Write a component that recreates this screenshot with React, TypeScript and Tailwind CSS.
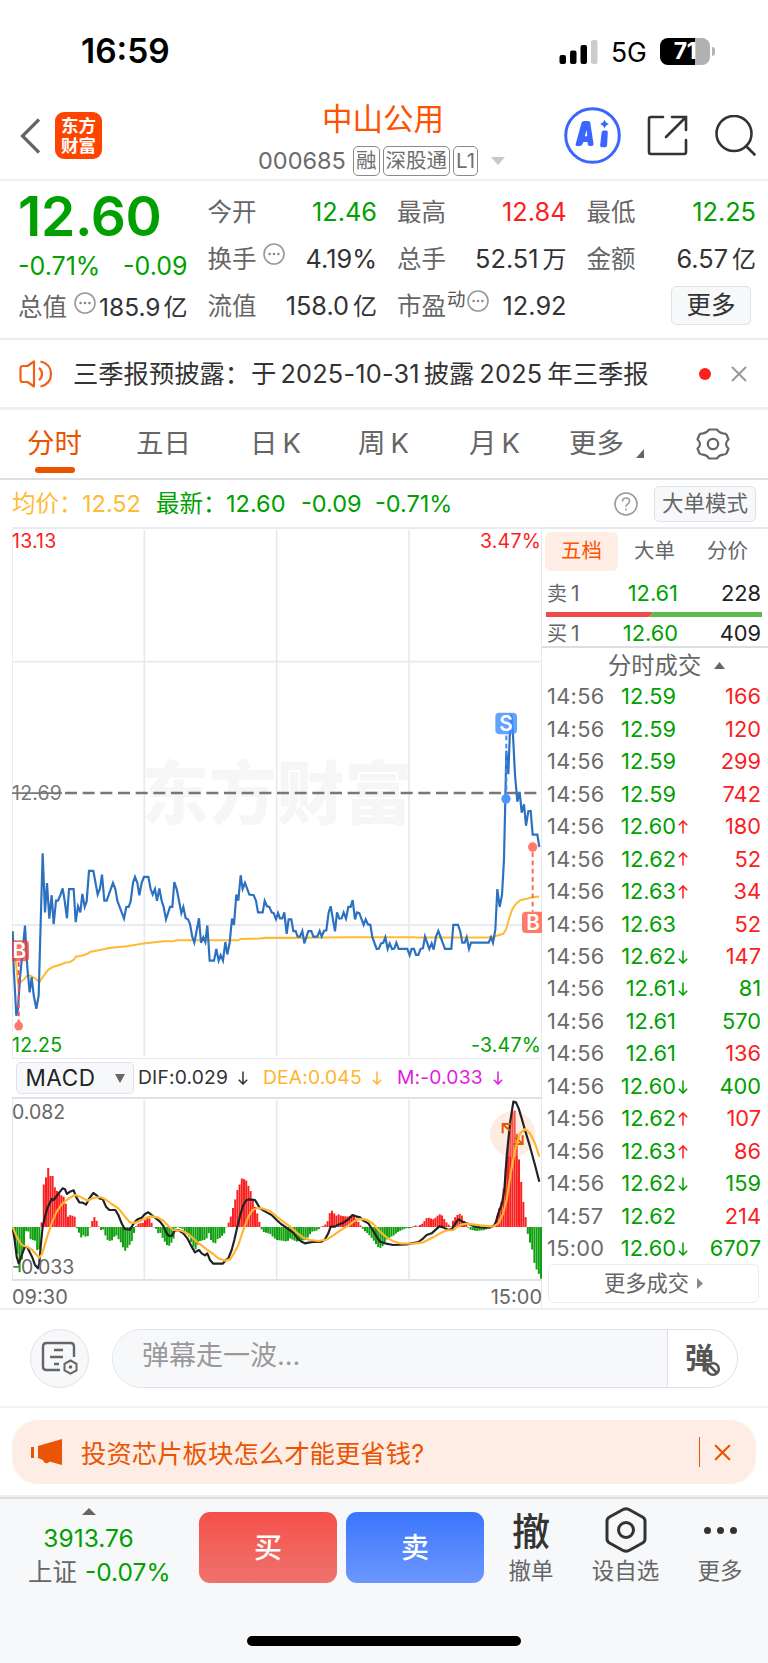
import type { ReactNode } from 'react'
import { X } from 'lucide-react'

const fontStack = "font-['Inter','Noto_Sans_CJK_SC',sans-serif]"
const greyBtn = 'flex items-center justify-center rounded-[5px] border border-[#dfe2ea] bg-[#f7f8fa] leading-none'

type Point = [number, number]

const price: Point[] = [
  [38, 1195], [41, 1300], [49, 1440], [54, 1420], [60, 1330], [68, 1250], [75, 1178], [82, 1300], [89, 1372], [95, 1328],
  [101, 1380], [109, 1420], [116, 1382], [120, 1240], [128, 968], [135, 1140], [141, 1055], [148, 1158], [155, 1090],
  [161, 1174], [168, 1106], [174, 1106], [181, 1090], [188, 1070], [194, 1106], [201, 1157], [207, 1072], [221, 1072],
  [227, 1168], [234, 1122], [241, 1140], [247, 1086], [254, 1124], [260, 1108], [267, 1019], [280, 1019], [293, 1088],
  [300, 1070], [306, 1030], [313, 1106], [320, 1106], [339, 1054], [346, 1072], [352, 1106], [372, 1158], [379, 1124],
  [386, 1124], [392, 1108], [399, 1054], [405, 1037], [412, 1054], [418, 1090], [425, 1054], [432, 1037], [445, 1037],
  [452, 1072], [458, 1088], [465, 1072], [471, 1106], [478, 1070], [485, 1106], [491, 1124], [498, 1160], [510, 1124],
  [517, 1124], [523, 1052], [530, 1072], [537, 1106], [544, 1142], [550, 1124], [557, 1157], [564, 1160], [570, 1174],
  [577, 1212], [583, 1228], [597, 1157], [603, 1228], [610, 1212], [616, 1226], [622, 1178], [629, 1280], [642, 1280],
  [649, 1246], [656, 1280], [662, 1264], [669, 1280], [676, 1226], [682, 1262], [689, 1228], [696, 1158], [702, 1176],
  [709, 1088], [715, 1106], [722, 1032], [728, 1072], [735, 1054], [748, 1088], [761, 1090], [768, 1106], [774, 1140],
  [788, 1140], [794, 1106], [801, 1122], [808, 1124], [815, 1140], [821, 1142], [828, 1160], [834, 1142], [840, 1157],
  [847, 1157], [853, 1140], [860, 1202], [866, 1160], [874, 1160], [880, 1194], [887, 1194], [893, 1210], [900, 1210],
  [907, 1194], [913, 1230], [925, 1194], [934, 1194], [940, 1210], [952, 1210], [959, 1194], [965, 1210], [972, 1194],
  [979, 1192], [986, 1140], [992, 1122], [1005, 1195], [1011, 1140], [1018, 1158], [1025, 1157], [1031, 1140],
  [1038, 1158], [1045, 1124], [1052, 1124], [1058, 1104], [1065, 1160], [1071, 1140], [1078, 1142], [1091, 1176],
  [1097, 1160], [1104, 1175], [1111, 1176], [1117, 1212], [1130, 1246], [1137, 1245], [1143, 1230], [1150, 1228],
  [1156, 1212], [1163, 1246], [1169, 1230], [1176, 1246], [1183, 1245], [1189, 1228], [1196, 1246], [1222, 1246],
  [1229, 1264], [1235, 1246], [1242, 1246], [1248, 1263], [1255, 1263], [1262, 1246], [1269, 1244], [1275, 1210],
  [1288, 1246], [1295, 1230], [1301, 1248], [1308, 1210], [1315, 1194], [1335, 1246], [1354, 1246], [1360, 1176],
  [1374, 1176], [1381, 1196], [1387, 1228], [1394, 1228], [1400, 1212], [1407, 1246], [1413, 1228], [1466, 1228],
  [1473, 1212], [1479, 1228], [1486, 1190], [1492, 1072], [1499, 1124], [1506, 1090], [1512, 985], [1516, 810],
  [1519, 670], [1525, 738], [1530, 610], [1534, 565], [1539, 625], [1545, 740], [1552, 818], [1559, 790], [1565, 850],
  [1572, 826], [1578, 888], [1585, 846], [1592, 845], [1598, 914], [1612, 914], [1618, 950],
]

const average: Point[] = [
  [38, 1195], [44, 1260], [55, 1350], [62, 1342], [72, 1335], [82, 1322], [95, 1325], [108, 1334], [118, 1343],
  [130, 1325], [145, 1306], [160, 1298], [180, 1292], [195, 1286], [210, 1284], [222, 1277], [228, 1268], [245, 1266],
  [262, 1260], [272, 1254], [300, 1249], [330, 1243], [380, 1238], [430, 1230], [490, 1224], [520, 1224], [530, 1221],
  [715, 1221], [722, 1217], [780, 1216], [795, 1214], [870, 1214], [1040, 1212], [1243, 1212], [1250, 1213],
  [1460, 1213], [1485, 1210], [1495, 1206], [1510, 1202], [1518, 1190], [1528, 1155], [1538, 1128], [1550, 1113],
  [1562, 1104], [1580, 1100], [1600, 1095], [1618, 1094],
]

const dif: Point[] = [
  [38, 535], [44, 570], [50, 620], [56, 640], [62, 625], [68, 608], [75, 590], [82, 592], [90, 608], [98, 625],
  [105, 645], [114, 655], [118, 640], [122, 590], [128, 530], [135, 500], [142, 475], [150, 458], [155, 447],
  [161, 450], [170, 438], [180, 425], [188, 415], [195, 418], [201, 432], [210, 425], [221, 421], [228, 440],
  [238, 457], [248, 458], [258, 464], [268, 445], [280, 429], [290, 436], [300, 446], [308, 447], [318, 470],
  [328, 480], [346, 480], [355, 495], [365, 520], [374, 537], [390, 539], [400, 522], [408, 512], [415, 507],
  [425, 503], [435, 492], [445, 487], [455, 495], [468, 505], [480, 515], [490, 528], [500, 550], [507, 558],
  [516, 557], [524, 542], [535, 540], [550, 550], [562, 565], [575, 590], [585, 607], [597, 600], [605, 610],
  [615, 616], [622, 610], [630, 630], [640, 641], [668, 641], [678, 630], [685, 625], [695, 600], [703, 570],
  [712, 530], [722, 490], [730, 465], [740, 450], [750, 448], [765, 450], [780, 475], [800, 487], [815, 495],
  [830, 510], [843, 522], [855, 530], [870, 541], [880, 548], [895, 568], [905, 575], [915, 580], [925, 578],
  [940, 576], [965, 575], [975, 568], [985, 550], [992, 530], [1005, 530], [1015, 524], [1030, 518], [1045, 508],
  [1058, 495], [1068, 499], [1080, 502], [1090, 512], [1105, 520], [1118, 540], [1130, 560], [1140, 575],
  [1155, 580], [1180, 585], [1220, 583], [1255, 576], [1270, 565], [1280, 555], [1295, 550], [1308, 538],
  [1318, 529], [1330, 532], [1345, 540], [1356, 537], [1365, 522], [1375, 508], [1388, 515], [1400, 520],
  [1415, 526], [1440, 532], [1470, 533], [1485, 525], [1495, 490], [1506, 460], [1513, 420], [1520, 320],
  [1530, 220], [1540, 155], [1548, 157], [1556, 175], [1565, 205], [1575, 240], [1590, 290], [1605, 345], [1618, 395],
]

const dea: Point[] = [
  [38, 532], [50, 560], [65, 585], [80, 590], [95, 598], [110, 615], [118, 623], [126, 612], [140, 565], [155, 520],
  [170, 485], [185, 463], [200, 450], [215, 440], [225, 435], [240, 440], [262, 452], [280, 444], [300, 441],
  [315, 447], [335, 462], [355, 475], [375, 500], [390, 517], [400, 519], [415, 515], [440, 503], [455, 499],
  [475, 503], [490, 512], [505, 528], [520, 540], [545, 542], [565, 552], [590, 575], [620, 598], [640, 612],
  [655, 625], [675, 632], [690, 628], [702, 610], [715, 585], [730, 540], [745, 500], [758, 480], [772, 474],
  [790, 476], [810, 483], [830, 500], [850, 515], [870, 530], [890, 548], [910, 563], [930, 570], [955, 573],
  [980, 569], [1000, 556], [1020, 542], [1045, 527], [1065, 512], [1080, 507], [1100, 509], [1120, 522],
  [1140, 545], [1160, 562], [1180, 574], [1200, 580], [1240, 581], [1270, 577], [1300, 562], [1320, 550],
  [1340, 541], [1360, 540], [1380, 525], [1400, 521], [1440, 526], [1480, 530], [1495, 520], [1510, 490],
  [1520, 450], [1532, 370], [1545, 300], [1560, 250], [1575, 237], [1590, 250], [1605, 280], [1618, 320],
]

const histogram: Point[] = [
  [38, 540], [44, 560], [52, 610], [59, 668], [66, 625], [73, 595], [79, 540], [86, 545], [92, 568], [105, 572],
  [112, 602], [118, 600], [125, 515], [132, 393], [138, 382], [145, 352], [151, 378], [158, 378], [165, 415],
  [178, 432], [191, 440], [198, 463], [204, 500], [211, 495], [224, 500], [231, 538], [237, 548], [244, 563],
  [251, 555], [257, 560], [264, 558], [271, 528], [277, 512], [283, 501], [290, 513], [297, 531], [303, 540],
  [310, 538], [316, 556], [323, 570], [330, 573], [336, 571], [343, 560], [350, 556], [356, 568], [363, 578],
  [369, 592], [376, 603], [383, 592], [390, 583], [396, 572], [403, 545], [410, 524], [417, 520], [430, 518],
  [440, 503], [447, 503], [454, 517], [461, 531], [467, 534], [474, 550], [480, 546], [487, 562], [500, 585],
  [507, 588], [513, 580], [520, 570], [527, 535], [533, 530], [540, 534], [547, 536], [560, 552], [567, 560],
  [573, 575], [580, 590], [587, 598], [593, 585], [600, 573], [613, 570], [620, 565], [627, 548], [633, 570],
  [640, 578], [647, 580], [653, 567], [660, 564], [673, 550], [680, 529], [690, 510], [697, 480], [703, 462],
  [710, 425], [717, 410], [724, 385], [731, 387], [738, 390], [744, 405], [751, 420], [758, 448], [764, 468],
  [771, 488], [778, 515], [784, 537], [791, 546], [798, 548], [811, 552], [820, 562], [830, 570], [847, 572],
  [862, 575], [870, 565], [880, 570], [890, 575], [900, 572], [918, 570], [925, 560], [935, 545], [945, 543],
  [955, 540], [960, 531], [968, 529], [975, 525], [982, 517], [986, 500], [992, 481], [1000, 483], [1006, 500],
  [1014, 492], [1025, 498], [1045, 500], [1058, 492], [1068, 505], [1078, 520], [1085, 532], [1093, 542],
  [1105, 552], [1112, 560], [1120, 570], [1128, 582], [1138, 596], [1148, 588], [1158, 570], [1170, 562],
  [1182, 556], [1192, 547], [1205, 540], [1220, 534], [1232, 535], [1240, 529], [1246, 526], [1255, 530],
  [1262, 523], [1270, 520], [1277, 505], [1285, 503], [1300, 508], [1310, 500], [1318, 492], [1327, 497],
  [1337, 515], [1346, 524], [1352, 530], [1360, 510], [1368, 498], [1378, 491], [1386, 497], [1393, 515],
  [1400, 520], [1407, 538], [1430, 543], [1455, 540], [1466, 533], [1476, 528], [1486, 515], [1496, 480],
  [1506, 450], [1513, 400], [1520, 330], [1530, 220], [1540, 172], [1545, 185], [1549, 235], [1556, 318],
  [1562, 380], [1569, 448], [1576, 495], [1583, 550], [1590, 578], [1596, 595], [1602, 635], [1609, 657],
  [1615, 668], [1622, 686],
]

const trades = [
  ['14:56', '12.59', '', '166', 'r'],
  ['14:56', '12.59', '', '120', 'r'],
  ['14:56', '12.59', '', '299', 'r'],
  ['14:56', '12.59', '', '742', 'r'],
  ['14:56', '12.60', 'up', '180', 'r'],
  ['14:56', '12.62', 'up', '52', 'r'],
  ['14:56', '12.63', 'up', '34', 'r'],
  ['14:56', '12.63', '', '52', 'r'],
  ['14:56', '12.62', 'down', '147', 'r'],
  ['14:56', '12.61', 'down', '81', 'g'],
  ['14:56', '12.61', '', '570', 'g'],
  ['14:56', '12.61', '', '136', 'r'],
  ['14:56', '12.60', 'down', '400', 'g'],
  ['14:56', '12.62', 'up', '107', 'r'],
  ['14:56', '12.63', 'up', '86', 'r'],
  ['14:56', '12.62', 'down', '159', 'g'],
  ['14:57', '12.62', '', '214', 'r'],
  ['15:00', '12.60', 'down', '6707', 'g'],
]

const toPoints = (pts: Point[]) => pts.map((p) => p.join(',')).join(' ')

// linear interpolation, one bar per minute
function valueAt(pts: Point[], x: number) {
  for (let i = 1; i < pts.length; i++) {
    const [x0, y0] = pts[i - 1]
    const [x1, y1] = pts[i]
    if (x <= x1) return y0 + ((y1 - y0) * (x - x0)) / (x1 - x0)
  }
  return pts[pts.length - 1][1]
}

function InfoDots() {
  return (
    <svg width="22" height="22" viewBox="0 0 22 22" fill="none" className="shrink-0">
      <circle cx="11" cy="11" r="10" stroke="#999" strokeWidth="1.6" />
      <circle cx="6.6" cy="11" r="1.3" fill="#888" />
      <circle cx="11" cy="11" r="1.3" fill="#888" />
      <circle cx="15.4" cy="11" r="1.3" fill="#888" />
    </svg>
  )
}

function Arrow({ dir, className }: { dir: string; className?: string }) {
  return (
    <svg width="10" height="14" viewBox="0 0 10 14" fill="none" stroke="currentColor" strokeWidth="1.5" className={className}>
      {dir === 'up' ? <path d="M5 13.5V1M0.8 5.3 5 1l4.2 4.3" /> : <path d="M5 .5V13M.8 8.7 5 13l4.2-4.3" />}
    </svg>
  )
}

function StatusBar() {
  return (
    <div className="flex h-[92px] items-center justify-between pt-[11px] pr-[53px] pl-[81px] text-black">
      <div className="pt-[1px] text-[33.5px] font-semibold leading-none">16:59</div>
      <div className="flex items-center">
        <svg width="40" height="24" viewBox="0 0 40 24">
          <rect x="0.5" y="15" width="6.5" height="9" rx="2" />
          <rect x="11" y="10.5" width="6.5" height="13.5" rx="2" />
          <rect x="21.5" y="5" width="6.5" height="19" rx="2" />
          <rect x="32" y="0" width="6.5" height="24" rx="2" fill="#ccc" />
        </svg>
        <span className="ml-[12px] w-[37px] pt-[1px] text-[26.5px] leading-none">5G</span>
        <div className="ml-[12px] flex h-[27px] w-[50px] items-center justify-center rounded-[8px] bg-linear-to-r from-black from-70% to-[#b1b1b1] to-70%">
          <span className="text-[23px] font-bold leading-none tracking-[-0.5px] text-white">71</span>
        </div>
        <div className="ml-[2px] h-[9px] w-[3px] rounded-r-full bg-[#b5b5b5]" />
      </div>
    </div>
  )
}

function Tag({ children }: { children: ReactNode }) {
  return (
    <span className="flex h-[30px] items-center rounded-[5px] border-[1.5px] border-[#8a8a8a] px-[2px] text-[20.5px] leading-none text-[#6e6e6e]">
      {children}
    </span>
  )
}

function Header() {
  return (
    <div className="flex h-[89px] border-b-2 border-[#f0f0f2]">
      <div className="flex w-[258px] items-center pl-[20px]">
        <svg width="21" height="36" viewBox="0 0 21 36" fill="none" stroke="#666" strokeWidth="3.2">
          <path d="M19 1.5 2.5 18 19 34.5" />
        </svg>
        <div className="ml-[14px] flex h-[47px] w-[47px] flex-col items-center justify-center rounded-[9px] bg-[#ff4400] text-[17.5px] font-bold leading-[19.5px] text-white">
          <span>东方</span>
          <span>财富</span>
        </div>
      </div>
      <div className="flex w-[249px] flex-col">
        <div className="mt-[10px] pl-[64px] text-[30.5px] leading-[34px] text-[#ff5200]">中山公用</div>
        <div className="mt-[9px] flex h-[32px] items-center">
          <span className="w-[95px] text-[23.5px] leading-none text-[#6b6b6b]">000685</span>
          <div className="flex gap-[3px]">
            <Tag>融</Tag>
            <Tag>深股通</Tag>
            <Tag>L1</Tag>
          </div>
          <svg width="14" height="8" viewBox="0 0 14 8" className="ml-[13px]">
            <path d="M0 0h14L7 8z" fill="#c8c8c8" />
          </svg>
        </div>
      </div>
      <div className="flex flex-1 items-center pl-[57px]">
        <svg width="57" height="57" viewBox="0 0 57 57" fill="none" className="shrink-0">
          <circle cx="28.5" cy="28.5" r="26.8" stroke="#3a66ff" strokeWidth="3" />
          <path
            d="M17.6 15.600Q18.200 14 20 14h4.300q1.700 0 2 1.700l3.200 21q.3 2.300-1.900 2.300h-1.800q-1.800 0-2-1.800l-.2-2.200h-4.300l-.8 2q-.8 2-2.600 2h-3q-1.900 0-1.200-2zM22.600 23l-1.800 6.300h2.500z"
            fill="#3a66ff"
            fillRule="evenodd"
          />
          <path d="M37.700 25.300q.1-1.800 1.900-1.800h2.500q1.800 0 1.700 1.800l-.7 13q-.1 1.900-1.900 1.900h-3.400q-1.800 0-1.700-1.900z" fill="#3a66ff" />
          <path d="M40.500 12.500q1 3.500 4.500 4.500-3.500 1-4.500 4.500-1-3.500-4.500-4.500 3.500-1 4.500-4.500z" fill="#3a66ff" />
        </svg>
        <svg width="41" height="41" viewBox="0 0 41 41" fill="none" stroke="#333" strokeWidth="2.6" strokeLinecap="round" className="ml-[26px] shrink-0">
          <path d="M16 2H4Q2 2 2 4v33q0 2 2 2h33q2 0 2-2V25M25 2h14v13M38.500 2.500 19 22" />
        </svg>
        <svg width="42" height="42" viewBox="0 0 42 42" fill="none" stroke="#333" strokeWidth="2.6" strokeLinecap="round" className="ml-[27px] shrink-0">
          <circle cx="19" cy="18.500" r="17.500" />
          <path d="M31 31 39.500 39.500" />
        </svg>
      </div>
    </div>
  )
}

function Stat({ label, value, unit, color = 'text-[#333]', children }: { label: string; value: string; unit?: string; color?: string; children?: ReactNode }) {
  return (
    <div className="flex h-[47px] items-center justify-between leading-none">
      <div className="flex items-center">
        <span className="text-[24.5px] text-[#666]">{label}</span>
        {children}
      </div>
      <span className={`whitespace-nowrap text-[25.3px] ${color}`}>
        {value}
        {unit && <span className="ml-[4px] text-[24px]">{unit}</span>}
      </span>
    </div>
  )
}

function Summary() {
  return (
    <div className="grid h-[159px] grid-cols-4 gap-x-[20px] border-b-2 border-[#ebebed] pt-[7.5px] pr-[12px] pl-[18px]">
      <div className="leading-none">
        <div className="flex h-[55px] items-center text-[55px] font-semibold tracking-[-0.3px] text-[#00a000]">12.60</div>
        <div className="flex h-[45px] items-center justify-between text-[25px] text-[#00a000]">
          <span>-0.71%</span>
          <span>-0.09</span>
        </div>
        <div className="flex h-[38px] items-center justify-between whitespace-nowrap">
          <span className="text-[24.5px] text-[#666]">总值</span>
          <span className="-mt-[10px] ml-[3px]"><InfoDots /></span>
          <span className="text-[24.5px] text-[#333]">185.9<span className="ml-[3px] text-[24px]">亿</span></span>
        </div>
      </div>
      <div>
        <Stat label="今开" value="12.46" color="text-[#00a000]" />
        <Stat label="换手" value="4.19%">
          <span className="-mt-[10px] ml-[6px]"><InfoDots /></span>
        </Stat>
        <Stat label="流值" value="158.0" unit="亿" />
      </div>
      <div>
        <Stat label="最高" value="12.84" color="text-[#fa1e1e]" />
        <Stat label="总手" value="52.51" unit="万" />
        <Stat label="市盈" value="12.92">
          <span className="-mt-[14px] ml-[1px] text-[18.5px] text-[#555]">动</span>
          <span className="-mt-[10px] ml-[1px]"><InfoDots /></span>
        </Stat>
      </div>
      <div>
        <Stat label="最低" value="12.25" color="text-[#00a000]" />
        <Stat label="金额" value="6.57" unit="亿" />
        <div className="flex justify-end pt-[3px] pr-[5px]">
          <button className={`${greyBtn} h-[39px] w-[80px] text-[24.5px] text-[#333]`}>更多</button>
        </div>
      </div>
    </div>
  )
}

function Notice() {
  return (
    <div className="flex h-[70px] items-center border-b-[3px] border-[#f0f0f1] pl-[19px]">
      <svg width="34" height="28" viewBox="0 0 34 28" fill="none" stroke="#f06018" strokeWidth="2.200">
        <path d="M15 1.500v25L8.500 22H4q-2.500 0-2.500-2.500v-11Q1.500 6 4 6h4.500z" strokeLinejoin="round" />
        <path d="M20 8q3 2 3 6t-3 6M21.500 1.500Q32 4 32 14T21.500 26.500" />
      </svg>
      <span className="ml-[20px] w-[612px] whitespace-nowrap text-[25.3px] leading-none text-[#333]">
        三季报预披露：<span className="ml-[1px]">于</span><span className="mx-[4px] tracking-[0.2px]">2025-10-31</span>披露<span className="mx-[5px] tracking-[0.2px]">2025</span>年三季报
      </span>
      <span className="ml-[14px] h-[12px] w-[12px] rounded-full bg-[#fa2020]" />
      <X size={26} color="#999" strokeWidth={1.8} className="ml-[15px]" />
    </div>
  )
}

function Tabs() {
  return (
    <div className="flex h-[70px] items-center border-b-2 border-[#dddfe6] pb-[1px] text-[27.5px] leading-none whitespace-nowrap text-[#666]">
      <div className="flex h-full w-[109px] flex-col items-center pt-[20px] text-[#ea5400]">
        <span>分时</span>
        <span className="mt-[9px] h-[6px] w-[40px] rounded-full bg-[#ea5400]" />
      </div>
      <span className="ml-[27px] w-[114px]">五日</span>
      <span className="w-[108px]">日<span className="ml-[5px]">K</span></span>
      <span className="w-[111px]">周<span className="ml-[5px]">K</span></span>
      <span className="w-[100px]">月<span className="ml-[5px]">K</span></span>
      <span>更多</span>
      <svg width="8" height="9" viewBox="0 0 8 9" className="mt-[20px] ml-[12px]">
        <path d="M8 0v9H0z" fill="#666" />
      </svg>
      <svg width="34" height="32" viewBox="0 0 34 32" fill="none" stroke="#666" strokeWidth="2.200" strokeLinejoin="round" className="ml-[52px]">
        <path d="M13 1.500h8q2 3.500 6 3.800 2 0 3.500 1.200l2 5q-2.500 2-2.500 4.500t2.500 4.500l-2 5q-1.500 1.200-3.500 1.200-4 .3-6 3.800h-8q-2-3.500-6-3.800-2 0-3.500-1.200l-2-5Q4 18.500 4 16t-2.500-4.500l2-5Q5 5.300 7 5.300q4-.3 6-3.800z" />
        <circle cx="17" cy="16" r="5.200" />
      </svg>
    </div>
  )
}

function QuoteLine() {
  return (
    <div className="flex h-[47px] items-center pr-[12px] pl-[12px] text-[23.5px] leading-none whitespace-nowrap text-[#00a000]">
      <span className="w-[70px] text-[#ffbb33]">均价：</span>
      <span className="w-[74px] text-[#ffbb33]">12.52</span>
      <span className="w-[70px]">最新：</span>
      <span className="w-[75px]">12.60</span>
      <span className="w-[74px]">-0.09</span>
      <span className="flex-1">-0.71%</span>
      <svg width="24" height="24" viewBox="0 0 24 24" fill="none" stroke="#999" strokeWidth="1.600" className="mr-[16px]">
        <circle cx="12" cy="12" r="11" />
        <path d="M8.500 9.500q0-3.500 3.500-3.500t3.500 3.200q0 1.800-2 3-1.500 1-1.500 2.600M12 16.500v2" />
      </svg>
      <button className={`${greyBtn} h-[36px] w-[102px] text-[21.5px] text-[#666]`}>大单模式</button>
    </div>
  )
}

function PriceChart() {
  return (
    <div className="relative h-[531px] w-[530px] border-t-2 border-[#e9ebf0]">
      <svg width="530" height="531" viewBox="36 20 1590 1543" preserveAspectRatio="none" fill="none" className="-mt-[2px] block">
        <g stroke="#e6e9f0" strokeWidth="5">
          <path d="M36 20v1543M433 29v1529M830 29v1529M1227 29v1529M36 411h1590M36 1177h1590" />
        </g>
        <text x="424" y="868" fontSize="203" fontWeight="900" fill="#000" fillOpacity="0.035" fontFamily="Noto Sans CJK SC">东方财富</text>
        <path d="M195 793H1614" stroke="#777" strokeWidth="7" strokeDasharray="36 17" />
        <path d="M36 793H186" stroke="#777" strokeWidth="5" />
        <polyline points={toPoints(average)} stroke="#ffbb33" strokeWidth="6" />
        <polyline points={toPoints(price)} stroke="#2c70c0" strokeWidth="6.5" />

        <path d="M56 1284V1470" stroke="#ff4d4d" strokeWidth="6" strokeDasharray="14 10" />
        <circle cx="56" cy="1470" r="13" fill="#ff7a68" />
        <rect x="20" y="1221" width="67" height="61" rx="12" fill="#f23a30" fillOpacity="0.72" />
        <text x="58" y="1273" fontSize="62" fontWeight="600" textAnchor="middle" fill="#fff" fontFamily="Inter">B</text>

        <path d="M1519 626V800" stroke="#3b8cff" strokeWidth="6" strokeDasharray="14 10" />
        <circle cx="1518" cy="810" r="14" fill="#4a97ff" />
        <rect x="1486" y="560" width="65" height="62" rx="12" fill="#3b8cff" fillOpacity="0.8" />
        <text x="1518" y="613" fontSize="62" fontWeight="600" textAnchor="middle" fill="#fff" fontFamily="Inter">S</text>

        <path d="M1598 965V1138" stroke="#ff6b57" strokeWidth="6" strokeDasharray="14 10" />
        <circle cx="1598" cy="950" r="14" fill="#ff7a68" />
        <rect x="1566" y="1138" width="66" height="62" rx="12" fill="#ff7a68" />
        <text x="1599" y="1190" fontSize="62" fontWeight="600" textAnchor="middle" fill="#fff" fontFamily="Inter">B</text>
      </svg>
      <div className="absolute inset-0 flex flex-col justify-between pt-[3px] pr-[1px] pb-[3px] text-[19.5px] leading-[19px] tracking-[0.2px]">
        <div className="flex justify-between text-[#fa1e1e]"><span>13.13</span><span>3.47%</span></div>
        <div className="text-[#777]">12.69</div>
        <div className="flex justify-between text-[#00a000]"><span>12.25</span><span>-3.47%</span></div>
      </div>
    </div>
  )
}

function MacdChart() {
  const bars = Array.from({ length: 241 }, (_, i) => {
    const x = 39 + i * 6.6
    return { x, y: valueAt(histogram, x) }
  })
  return (
    <div className="relative h-[184px] w-[530px] overflow-hidden border-y-2 border-[#e0e2ea]">
      <svg width="530" height="182" viewBox="36 147 1590 546" fill="none" className="block">
        <path d="M37 147v546M433 150v540M830 150v540M1227 150v540" stroke="#e6e9f0" strokeWidth="5" />
        {bars.map(({ x, y }) => (
          <rect key={x} x={x - 3} y={Math.min(y, 531)} width="6" height={Math.max(Math.abs(y - 531), 1)} fill={y < 531 ? '#fa2020' : '#10a010'} />
        ))}
        <circle cx="1538" cy="252" r="68" fill="#f9c0a0" fillOpacity="0.3" />
        <polyline points={toPoints(dif)} stroke="#222" strokeWidth="6.5" strokeLinejoin="round" />
        <path d="M1508 250v-28h28M1510 224l20 18M1568 256v26h-28M1566 280l-20-18" stroke="#ea5504" strokeWidth="6" />
        <polyline points={toPoints(dea)} stroke="#ffb52e" strokeWidth="6.5" strokeLinejoin="round" />
      </svg>
      <div className="absolute inset-0 flex flex-col justify-between pt-[3px] pb-[2px] text-[19.5px] leading-[20px] text-[#666]">
        <span>0.082</span>
        <span>-0.033</span>
      </div>
    </div>
  )
}

function Charts() {
  return (
    <div className="w-[530px]">
      <PriceChart />
      <div className="flex h-[39px] items-center border-t border-[#e6e9f0] pl-[4px] text-[19.3px] leading-none tracking-[0.15px] whitespace-nowrap">
        <div className={`${greyBtn} h-[32px] w-[118px] gap-[19px] text-[22.5px] text-[#222]`}>
          <span className="tracking-[0.6px]">MACD</span>
          <svg width="10" height="9" viewBox="0 0 10 9"><path d="M0 0h10L5 9z" fill="#666" /></svg>
        </div>
        <span className="ml-[4px] flex w-[125px] items-center text-[#333]">DIF:0.029<Arrow dir="down" className="ml-[10px]" /></span>
        <span className="flex w-[134px] items-center text-[#ffb52e]">DEA:0.045<Arrow dir="down" className="ml-[10px]" /></span>
        <span className="flex items-center text-[#e01ee0]">M:-0.033<Arrow dir="down" className="ml-[10px]" /></span>
      </div>
      <MacdChart />
      <div className="flex h-[29px] items-center justify-between pt-[2px] text-[20px] leading-none text-[#666]">
        <span>09:30</span>
        <span>15:00</span>
      </div>
    </div>
  )
}

function OrderPanel() {
  return (
    <div className="-ml-[1px] flex flex-1 flex-col border-t-2 border-l-[1.5px] border-[#e6e8ee]">
      <div className="mt-[3px] flex h-[39px] text-[20.5px] leading-none text-[#666]">
        <span className="ml-[3px] flex w-[73px] items-center justify-center rounded-[6px] bg-[#ffeee6] text-[#ff5200]">五档</span>
        <span className="flex w-[73px] items-center justify-center">大单</span>
        <span className="flex w-[73px] items-center justify-center">分价</span>
      </div>
      <div className="flex h-[41px] items-center pt-[4px] pr-[7px] pl-[5px] text-[21.8px] leading-none text-[#222]">
        <span className="w-[55px] text-[20px] text-[#666]">卖<span className="ml-[4px] text-[21px]">1</span></span>
        <span className="w-[76px] text-right text-[#00a000]">12.61</span>
        <span className="flex-1 text-right">228</span>
      </div>
      <svg width="216" height="5" viewBox="0 0 216 5" className="ml-[4px] block">
        <path d="M0 0h107l-4 5H0z" fill="#ee4a4a" />
        <path d="M107 0h109v5H103z" fill="#5cbb4a" />
      </svg>
      <div className="flex h-[31px] items-center border-b-2 border-[#dcdee5] pt-[4px] pr-[7px] pl-[5px] text-[21.8px] leading-none text-[#222]">
        <span className="w-[55px] text-[20px] text-[#666]">买<span className="ml-[4px] text-[21px]">1</span></span>
        <span className="w-[76px] text-right text-[#00a000]">12.60</span>
        <span className="flex-1 text-right">409</span>
      </div>
      <div className="flex h-[33px] items-center gap-[13px] pt-[2px] pl-[66px] text-[23.3px] leading-none text-[#666]">
        分时成交
        <svg width="11" height="7" viewBox="0 0 11 7"><path d="M5.500 0 11 7H0z" fill="#666" /></svg>
      </div>
      {trades.map(([time, value, dir, volume, side], i) => (
        <div key={i} className="flex h-[32.46px] shrink-0 items-center pr-[7px] pl-[5px] text-[21.8px] leading-none">
          <span className="w-[64px] tracking-[0.3px] text-[#6b6b6b]">{time}</span>
          <span className="w-[65px] text-right text-[#00a000]">{value}</span>
          <span className="w-[14px] pl-[2px]">
            {dir && <Arrow dir={dir} className={dir === 'up' ? 'text-[#fa1e1e]' : 'text-[#00a000]'} />}
          </span>
          <span className={`flex-1 text-right ${side === 'r' ? 'text-[#fa1e1e]' : 'text-[#00a000]'}`}>{volume}</span>
        </div>
      ))}
      <div className="mt-[-1px] ml-[6px] flex h-[39px] w-[211px] shrink-0 items-center justify-center gap-[8px] rounded-[6px] border-[1.5px] border-[#ebecf0] text-[21.3px] leading-none text-[#666]">
        更多成交
        <svg width="6" height="11" viewBox="0 0 6 11"><path d="M0 0 6 5.500 0 11z" fill="#888" /></svg>
      </div>
    </div>
  )
}

function Danmu() {
  return (
    <div className="flex h-[98px] items-center gap-[23px] border-b-2 border-[#f2f3f5] pr-[30px] pl-[30px]">
      <div className="flex h-[59px] w-[59px] items-center justify-center rounded-full border-[1.5px] border-[#e0e2e9] bg-[#f7f8fa]">
        <svg width="37" height="34" viewBox="0 0 37 34" fill="none" stroke="#666" strokeWidth="2.400">
          <path d="M19 29H5.500Q2 29 2 25.500v-20Q2 2 5.500 2h24Q33 2 33 5.500V16" />
          <path d="M13 9h9M9 16h13M13 23h5" />
          <path d="m29.500 19.500 6 3.300v6.500l-6 3.300-6-3.300v-6.500z" strokeWidth="2" />
          <circle cx="29.500" cy="26" r="1.800" fill="#666" stroke="none" />
        </svg>
      </div>
      <div className="flex h-[59px] flex-1 overflow-hidden rounded-full border-[1.5px] border-[#dfe1e8]">
        <div className="flex flex-1 items-center bg-[#f7f8fa] pb-[5px] pl-[29px] text-[27px] leading-none text-[#999]">弹幕走一波...</div>
        <div className="flex w-[70px] items-center border-l-[1.5px] border-[#dfe1e8] pl-[17px]">
          <span className="text-[29px] font-bold leading-none text-[#555]">弹</span>
          <svg width="16" height="16" viewBox="0 0 16 16" fill="#fff" stroke="#555" strokeWidth="2.600" className="-ml-[9px] mt-[22px]">
            <circle cx="8" cy="8" r="5.800" />
            <path d="m4.500 4.500 7 7" />
          </svg>
        </div>
      </div>
    </div>
  )
}

function Banner() {
  return (
    <div className="mx-[12px] mt-[12px] flex h-[64px] items-center rounded-[26px] bg-[#fdede5] pl-[19px] text-[#ea5504]">
      <svg width="32" height="26" viewBox="0 0 32 26" fill="currentColor">
        <path d="M0 8h3v11H0zM7 7 31 0v26l-12.500-3.500q-1.500 2.500-4 1.500t-2.500-3L7 19z" />
      </svg>
      <span className="ml-[18px] flex-1 pt-[4px] text-[25.3px] leading-none tracking-[0.1px]">投资芯片板块怎么才能更省钱?</span>
      <span className="h-[30px] w-[1.5px] bg-[#ea5504]" />
      <X size={27} strokeWidth={1.9} className="mr-[20px] ml-[9px]" />
    </div>
  )
}

function BottomBar() {
  return (
    <div className="mt-[11px] flex h-[168px] flex-col justify-between border-t-2 border-[#eeeff0] bg-[#f7f8fa] pb-[17px]">
      <div className="flex border-t-2 border-[#dfe0e3] leading-none whitespace-nowrap text-[#666]">
        <div className="flex w-[199px] flex-col items-center pt-[9px] pr-[22px]">
          <svg width="14" height="7" viewBox="0 0 14 7"><path d="M7 0l7 7H0z" fill="#666" /></svg>
          <span className="mt-[11px] text-[24.5px] text-[#00a000]">3913.76</span>
          <span className="mt-[9px] flex w-full items-center gap-[8px] pl-[28px] text-[24.5px]">上证<span className="text-[#00a000]">-0.07%</span></span>
        </div>
        <div className="flex gap-[9px] pt-[13px] text-[28px] font-medium text-white">
          <button className="h-[71px] w-[138px] rounded-[11px] bg-linear-to-b from-[#f5504a] to-[#ee716c]">买</button>
          <button className="h-[71px] w-[138px] rounded-[11px] bg-linear-to-b from-[#3a75fb] to-[#6c97fe]">卖</button>
        </div>
        <div className="ml-[9px] flex w-[76px] flex-col items-center pt-[1px] text-[22.5px]">
          <span className="flex h-[60px] items-center pt-[1px] text-[38px] font-medium text-[#333]">撤</span>
          <span>撤单</span>
        </div>
        <div className="flex w-[113px] flex-col items-center pt-[1px] text-[22.5px]">
          <span className="flex h-[60px] items-center">
            <svg width="42" height="46" viewBox="0 0 42 46" fill="none" stroke="#333" strokeWidth="3">
              <path d="M18.500 2.300q2.500-1.300 5 0l14 7.700q2.500 1.400 2.500 4v18q0 2.600-2.500 4l-14 7.700q-2.500 1.300-5 0l-14-7.700Q2 34.600 2 32V14q0-2.600 2.500-4z" />
              <circle cx="21" cy="23" r="7.500" />
            </svg>
          </span>
          <span>设自选</span>
        </div>
        <div className="flex w-[76px] flex-col items-center pt-[1px] text-[22.5px]">
          <span className="flex h-[60px] items-center gap-[6px]">
            <i className="h-[7px] w-[7px] rounded-full bg-[#333]" />
            <i className="h-[7px] w-[7px] rounded-full bg-[#333]" />
            <i className="h-[7px] w-[7px] rounded-full bg-[#333]" />
          </span>
          <span>更多</span>
        </div>
      </div>
      <div className="mx-auto h-[10px] w-[274px] rounded-full bg-black" />
    </div>
  )
}

export default function App() {
  return (
    <div className={`${fontStack} flex h-[1663px] w-[768px] flex-col overflow-hidden bg-white`}>
      <StatusBar />
      <Header />
      <Summary />
      <Notice />
      <Tabs />
      <QuoteLine />
      <div className="flex h-[783px] border-b-2 border-[#f0f0f2] pl-[12px]">
        <Charts />
        <OrderPanel />
      </div>
      <Danmu />
      <Banner />
      <BottomBar />
    </div>
  )
}
